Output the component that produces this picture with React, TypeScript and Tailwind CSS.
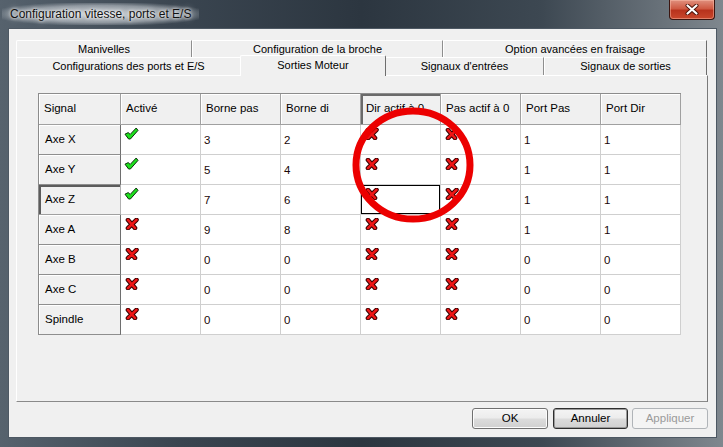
import React from 'react';

const Check = () => (
  <svg width="15" height="13" viewBox="0 0 15 13">
    <path
      d="M1 7.2 L4.2 5.6 L6.2 7.4 L12.2 1 L14 3.4 L6.4 12 L4.6 12 Z"
      fill="#1de01d"
      stroke="#0b300b"
      strokeWidth="1"
      strokeLinejoin="round"
    />
  </svg>
);

const Cross = () => (
  <svg width="14" height="12" viewBox="0 0 14 12">
    <g strokeLinecap="round">
      <path d="M3 2 L10 10 M11.5 1.8 L3 10.2" stroke="#3a0000" strokeWidth="4.6" />
      <path d="M3 2 L10 10 M11.5 1.8 L3 10.2" stroke="#ef1616" strokeWidth="2.6" />
    </g>
  </svg>
);

type Row = {
  name: string;
  act: boolean;
  bp: string;
  bd: string;
  pp: string;
  pd: string;
};

const rows: Row[] = [
  { name: 'Axe X', act: true, bp: '3', bd: '2', pp: '1', pd: '1' },
  { name: 'Axe Y', act: true, bp: '5', bd: '4', pp: '1', pd: '1' },
  { name: 'Axe Z', act: true, bp: '7', bd: '6', pp: '1', pd: '1' },
  { name: 'Axe A', act: false, bp: '9', bd: '8', pp: '1', pd: '1' },
  { name: 'Axe B', act: false, bp: '0', bd: '0', pp: '0', pd: '0' },
  { name: 'Axe C', act: false, bp: '0', bd: '0', pp: '0', pd: '0' },
  { name: 'Spindle', act: false, bp: '0', bd: '0', pp: '0', pd: '0' },
];

const headers = ['Signal', 'Activé', 'Borne pas', 'Borne di', 'Dir actif à 0', 'Pas actif à 0', 'Port Pas', 'Port Dir'];

const IconCell = ({ ok, focused }: { ok: boolean; focused?: boolean }) => (
  <div
    className={
      focused
        ? 'flex items-start bg-white border-r border-b border-[#cfcfcf] shadow-[inset_0_0_0_1px_#000] pl-[4px] pt-[3px]'
        : ok
        ? 'flex items-start bg-white border-r border-b border-[#cfcfcf] pl-[3px] pt-[2px]'
        : 'flex items-start bg-white border-r border-b border-[#cfcfcf] pl-[4px] pt-[3px]'
    }
  >
    {ok ? <Check /> : <Cross />}
  </div>
);

const TextCell = ({ v }: { v: string }) => (
  <div className="flex items-center bg-white border-r border-b border-[#cfcfcf] pl-[3px] pt-[2px] text-[#1a0808]">{v}</div>
);

export default function App() {
  return (
    <div className="relative w-[723px] h-[447px] overflow-hidden flex flex-col font-['Liberation_Sans',Arial,sans-serif] text-black bg-[linear-gradient(90deg,#56626d_0%,#3a4550_25%,#2c3640_50%,#3d4852_75%,#7f878e_100%)]">
      {/* Title bar */}
      <div className="h-[28px] flex items-start shrink-0">
        <span className="mt-[3px] ml-[2px] px-[8px] py-[4px] text-[12px] leading-[14px] text-[#111] bg-[radial-gradient(ellipse_at_center,rgba(230,234,238,0.85)_0%,rgba(200,206,212,0.55)_55%,rgba(200,206,212,0)_80%)] [text-shadow:0_0_6px_#fff,0_0_3px_#fff]">
          Configuration vitesse, ports et E/S
        </span>
        <div className="ml-auto mr-[8px] w-[46px] h-[20px] rounded-b-[4px] border border-t-0 border-[#3b1510] bg-[linear-gradient(180deg,#e0907e_0%,#cf5a43_45%,#b8331d_55%,#c9472c_100%)] shadow-[inset_0_0_0_1px_rgba(255,200,180,0.45)] flex items-center justify-center">
          <svg width="14" height="11" viewBox="0 0 14 11">
            <path d="M2.5 1.5 L11.5 9.5 M11.5 1.5 L2.5 9.5" stroke="#4a1208" strokeWidth="4" strokeLinecap="round" />
            <path d="M2.5 1.5 L11.5 9.5 M11.5 1.5 L2.5 9.5" stroke="#ffffff" strokeWidth="2.2" strokeLinecap="round" />
          </svg>
        </div>
      </div>

      {/* Body with side frames */}
      <div className="flex h-[410px] shrink-0 pl-[8px] pr-[6px]">
        <div className="flex-1 flex flex-col bg-[#f0f0f0] border border-[#4d5863] pt-[11px] pl-[7px] pr-[8px]">
          {/* Tabs row 1 */}
          <div className="flex h-[17px] text-[11px] w-[691px]">
            <div className="w-[176px] flex items-center justify-center bg-[#f0f0f0] border-t border-l border-white border-r border-r-[#8e8e8e] rounded-tl-[2px]">Manivelles</div>
            <div className="w-[251px] flex items-center justify-center bg-[#f0f0f0] border-t border-l border-white border-r border-r-[#8e8e8e]">Configuration de la broche</div>
            <div className="w-[264px] flex items-center justify-center bg-[#f0f0f0] border-t border-l border-white border-r border-r-[#6e6e6e]">Option avancées en fraisage</div>
          </div>
          {/* Tabs row 2 */}
          <div className="flex items-end h-[18px] text-[11px] w-[691px]">
            <div className="w-[224px] h-[18px] flex items-center justify-center bg-[#f0f0f0] border-t border-l border-white">Configurations des ports et E/S</div>
            <div className="relative z-10 w-[146px] h-[21px] -mb-px pb-[2px] flex items-center justify-center bg-[#f0f0f0] border-t border-l border-white border-r border-r-[#6e6e6e] rounded-t-[2px]">Sorties Moteur</div>
            <div className="w-[158px] h-[18px] flex items-center justify-center bg-[#f0f0f0] border-t border-white border-r border-r-[#8e8e8e]">Signaux d'entrées</div>
            <div className="w-[163px] h-[18px] flex items-center justify-center bg-[#f0f0f0] border-t border-l border-white border-r border-r-[#6e6e6e]">Signaux de sorties</div>
          </div>
          {/* Tab panel */}
          <div className="w-[692px] h-[327px] bg-[#f0f0f0] border-t border-l border-white border-r border-b border-r-[#7a7a7a] border-b-[#8a8a8a] pl-[21px] pt-[17px]">
            <div className="grid grid-cols-[82px_repeat(7,80px)] grid-rows-[31px_repeat(7,30px)] w-[643px] border-t border-l border-[#8c8c8c] text-[11.5px]">
              {headers.map((h, i) => (
                <div
                  key={h}
                  className={
                    i === 4
                      ? 'flex items-center pl-[5px] bg-[#f0f0f0] border-r border-b border-[#a0a0a0] shadow-[inset_2px_2px_0_#6a6a6a] whitespace-nowrap overflow-hidden'
                      : 'flex items-center pl-[5px] bg-[#f0f0f0] border-r border-b border-[#a0a0a0] shadow-[inset_1px_1px_0_#fff] whitespace-nowrap overflow-hidden'
                  }
                >
                  {h}
                </div>
              ))}
              {rows.map((r) => (
                <React.Fragment key={r.name}>
                  <div
                    className={
                      r.name === 'Axe Z'
                        ? 'flex items-center pl-[6px] pt-[1px] bg-[#f0f0f0] border-r border-b border-r-[#b0b0b0] border-b-[#a0a0a0] shadow-[inset_2px_2px_0_#5c5c5c]'
                        : 'flex items-center pl-[6px] pt-[1px] bg-[#f0f0f0] border-r border-b border-r-[#6e6e6e] border-b-[#8e8e8e] shadow-[inset_1px_1px_0_#fff]'
                    }
                  >
                    {r.name}
                  </div>
                  <IconCell ok={r.act} />
                  <TextCell v={r.bp} />
                  <TextCell v={r.bd} />
                  <IconCell ok={false} focused={r.name === 'Axe Z'} />
                  <IconCell ok={false} />
                  <TextCell v={r.pp} />
                  <TextCell v={r.pd} />
                </React.Fragment>
              ))}
            </div>
          </div>
          {/* Buttons */}
          <div className="flex justify-end mt-[6px] text-[11.5px]">
            <button className="w-[76px] h-[21px] rounded-[3px] border border-[#707070] bg-[linear-gradient(180deg,#f4f4f4_0%,#ececec_48%,#dcdcdc_52%,#d0d0d0_100%)] shadow-[inset_0_0_0_1px_#fcfcfc]">OK</button>
            <button className="ml-[5px] w-[75px] h-[21px] rounded-[3px] border border-[#2e2e2e] bg-[linear-gradient(180deg,#f4f4f4_0%,#ececec_48%,#dcdcdc_52%,#d0d0d0_100%)] shadow-[inset_0_0_0_1px_#9a9a9a]">Annuler</button>
            <button className="ml-[4px] w-[76px] h-[21px] rounded-[3px] border border-[#b0b4b8] bg-[#f4f4f4] text-[#9a9a9a]">Appliquer</button>
          </div>
        </div>
      </div>
      <div className="h-[9px] shrink-0" />

      {/* Red annotation circle */}
      <svg className="absolute left-0 top-0 pointer-events-none" width="723" height="447" viewBox="0 0 723 447">
        <ellipse cx="413" cy="165" rx="57" ry="54" fill="none" stroke="#ec0000" strokeWidth="7" />
      </svg>
    </div>
  );
}
